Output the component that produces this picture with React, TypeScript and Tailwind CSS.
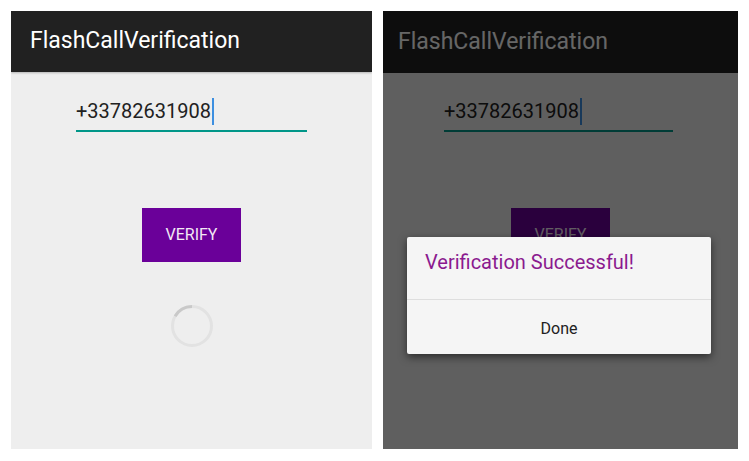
import React from "react"

const font = { fontFamily: "Roboto, 'Noto Sans', sans-serif" }

function Spinner() {
  return (
    <svg width="44" height="44" viewBox="0 0 44 44">
      <circle cx="22" cy="22" r="19.5" fill="none" stroke="#e2e2e2" strokeWidth="3" />
      <path d="M 22 2.5 A 19.5 19.5 0 0 0 5.1 12.25" fill="none" stroke="#c9c9c9" strokeWidth="3" />
    </svg>
  )
}

function Screen({ dim }: { dim?: boolean }) {
  return (
    <div className="flex flex-col items-center h-full">
      <div
        className={
          dim
            ? "w-full h-[62px] bg-[#212121] flex items-center pl-[15px]"
            : "w-full h-[61px] bg-[#212121] flex items-center pl-[19px] shadow-[0_1px_2px_rgba(0,0,0,0.25)]"
        }
      >
        <span className="text-[23px] text-white">FlashCallVerification</span>
      </div>
      <div
        className={
          dim
            ? "mt-[24px] w-[229px] pb-[5px] border-b-2 border-[#009688] -translate-x-[2px]"
            : "mt-[25px] w-[231px] pb-[5px] border-b-2 border-[#009688]"
        }
      >
        <div className="h-[28px] leading-[28px] text-[20px] text-[#212121] flex items-center">
          <span>+33782631908</span>
          <span className="inline-block w-[2px] h-[27px] bg-[#3d8fe0] ml-px" />
        </div>
      </div>
      <div className="mt-[76px] w-[99px] h-[54px] bg-[#6a0099] flex items-center justify-center">
        <span className="text-[16px] text-[#f3e8f5]">VERIFY</span>
      </div>
      {!dim && (
        <div className="mt-[42px]">
          <Spinner />
        </div>
      )}
    </div>
  )
}

export default function App() {
  return (
    <div className="w-[749px] h-[461px] bg-white flex pt-[11px] pl-[11px] gap-[11px]" style={font}>
      <div className="w-[361px] h-[438px] bg-[#eeeeee] overflow-hidden">
        <Screen />
      </div>
      <div className="relative w-[355px] h-[438px] bg-[#eeeeee] overflow-hidden">
        <Screen dim />
        <div className="absolute inset-0 bg-black/60" />
        <div className="absolute left-[24px] top-[226px] w-[304px] h-[117px] bg-[#f5f5f5] rounded-[2px] shadow-[0_3px_8px_rgba(0,0,0,0.55)] flex flex-col">
          <div className="h-[63px] pl-[18px] pt-[10px] border-b border-[#dedede]">
            <span className="text-[20px] text-[#8b1a8f]">Verification Successful!</span>
          </div>
          <div className="flex-1 flex items-center justify-center pt-[3px]">
            <span className="text-[16px] text-[#212121]">Done</span>
          </div>
        </div>
      </div>
    </div>
  )
}
